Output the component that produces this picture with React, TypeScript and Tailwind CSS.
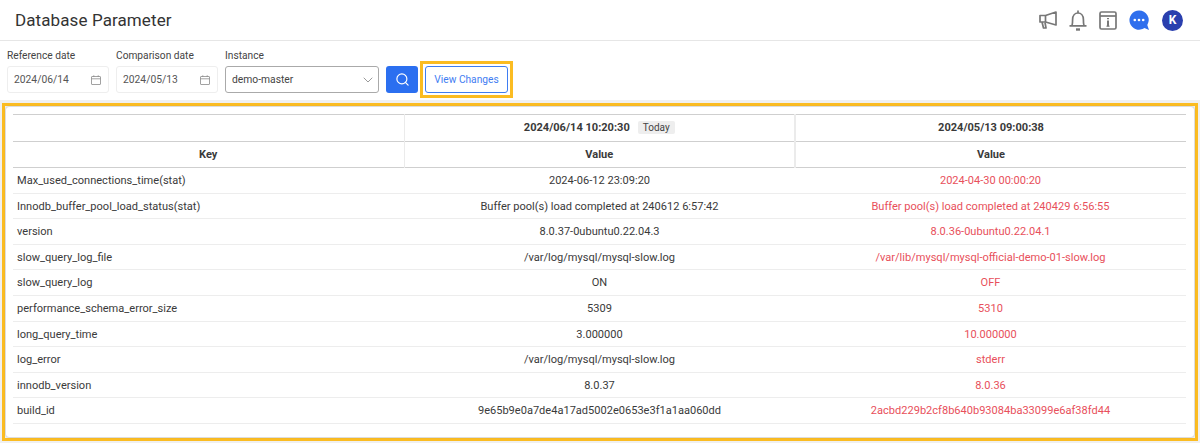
import { Search, ChevronDown } from 'lucide-react';

const rows = [
  ['Max_used_connections_time(stat)', '2024-06-12 23:09:20', '2024-04-30 00:00:20'],
  ['Innodb_buffer_pool_load_status(stat)', 'Buffer pool(s) load completed at 240612 6:57:42', 'Buffer pool(s) load completed at 240429 6:56:55'],
  ['version', '8.0.37-0ubuntu0.22.04.3', '8.0.36-0ubuntu0.22.04.1'],
  ['slow_query_log_file', '/var/log/mysql/mysql-slow.log', '/var/lib/mysql/mysql-official-demo-01-slow.log'],
  ['slow_query_log', 'ON', 'OFF'],
  ['performance_schema_error_size', '5309', '5310'],
  ['long_query_time', '3.000000', '10.000000'],
  ['log_error', '/var/log/mysql/mysql-slow.log', 'stderr'],
  ['innodb_version', '8.0.37', '8.0.36'],
  ['build_id', '9e65b9e0a7de4a17ad5002e0653e3f1a1aa060dd', '2acbd229b2cf8b640b93084ba33099e6af38fd44'],
];

function HeaderIcons() {
  return (
    <div className="flex items-center gap-3">
      <svg width="18" height="18" viewBox="0 0 18 18" fill="none" stroke="#777" strokeWidth="1.7" strokeLinejoin="round">
        <path d="M17 1 L6.5 4.5 H1 V11 H6.5 L17 14 Z" />
        <path d="M6.5 4.5 V11 M3 11 L4.5 17 H7 L6 11.5" />
      </svg>
      <svg width="18" height="21" viewBox="0 0 18 21" fill="none" stroke="#777" strokeWidth="1.7" strokeLinejoin="round">
        <path d="M0.5 15.8 H17.5 M3 15.8 C3.6 14 3.6 12 3.6 9.5 C3.6 5.5 6 3 9 3 C12 3 14.4 5.5 14.4 9.5 C14.4 12 14.4 14 15 15.8" />
        <path d="M9 0.5 V3" />
        <path d="M7 19.5 H11" strokeWidth="2.4" />
      </svg>
      <svg width="18" height="19" viewBox="0 0 18 19" fill="none" stroke="#777" strokeWidth="1.7" strokeLinejoin="round">
        <rect x="1" y="1" width="16" height="17" rx="1.5" />
        <path d="M1 5 H17" />
        <path d="M9 9.5 V15" strokeWidth="2" />
        <path d="M9 7 V8.2" strokeWidth="2" />
        <path d="M7.5 15.2 H10.5" strokeWidth="1.2" />
      </svg>
      <svg width="21" height="21" viewBox="0 0 21 21">
        <path d="M10 0.5 A9.6 9.6 0 1 0 15.5 18 L20 20 L18.3 15 A9.6 9.6 0 0 0 10 0.5 Z" fill="#2f6fed" />
        <circle cx="5.8" cy="10" r="1.3" fill="#fff" />
        <circle cx="10" cy="10" r="1.3" fill="#fff" />
        <circle cx="14.2" cy="10" r="1.3" fill="#fff" />
      </svg>
      <div className="flex h-[21px] w-[21px] items-center justify-center rounded-full bg-[#2a3fae] text-[12px] font-bold text-white">K</div>
    </div>
  );
}

function CalendarIcon() {
  return (
    <svg width="10" height="10" viewBox="0 0 10 10" fill="none" stroke="#8a8a8a" strokeWidth="0.8">
      <rect x="0.5" y="1.5" width="9" height="8" rx="0.5" />
      <path d="M0.5 3.8 H9.5 M2.8 0.3 V2 M7.2 0.3 V2" />
    </svg>
  );
}

function DateField({ label, value }: { label: string; value: string }) {
  return (
    <div className="w-[102px]">
      <div className="mb-[2px] h-[17px] pt-[1px] text-[10.2px] leading-[16px] text-[#444]">{label}</div>
      <div className="flex h-[27px] items-center justify-between rounded-[3px] border border-[#eeeeee] pl-[6px] pr-[7px] text-[10.3px] text-[#555]">
        <span>{value}</span>
        <CalendarIcon />
      </div>
    </div>
  );
}

export default function App() {
  return (
    <div className="flex h-[443px] w-[1200px] flex-col overflow-hidden bg-[#f0f0f0] font-['Roboto',sans-serif]">
      <header className="flex h-[41px] items-center justify-between border-b border-[#e6e6e6] bg-white pl-[15px] pr-[17px]">
        <h1 className="pt-[1px] text-[17px] font-normal tracking-[0.1px] text-[#333]">Database Parameter</h1>
        <HeaderIcons />
      </header>

      <div className="flex h-[59px] items-start gap-[7px] bg-white pl-[7px] pt-[6px]">
        <DateField label="Reference date" value="2024/06/14" />
        <DateField label="Comparison date" value="2024/05/13" />
        <div className="w-[154px]">
          <div className="mb-[2px] h-[17px] pt-[1px] text-[10.2px] leading-[16px] text-[#444]">Instance</div>
          <div className="flex h-[27px] items-center justify-between rounded-[3px] border border-[#aaaaaa] pl-[6px] pr-[2px] text-[10.3px] text-[#444]">
            <span>demo-master</span>
            <ChevronDown size={16} strokeWidth={1} color="#666" />
          </div>
        </div>
        <button className="mt-[19px] flex h-[27px] w-[32px] items-center justify-center rounded-[3px] bg-[#2b6ff0]">
          <Search size={15} strokeWidth={1.9} color="#fff" />
        </button>
        <div className="relative mt-[19px]">
          <button className="flex h-[27px] w-[83px] items-center justify-center rounded-[3px] border border-[#3f7df2] bg-white text-[10.2px] text-[#3f7df2]">
            View Changes
          </button>
          <div className="absolute left-[-5px] top-[-5px] h-[37px] w-[93px] border-[3px] border-[#fbbc22]" />
        </div>
      </div>

      <div className="ml-[2px] mt-[3px] h-[338px] w-[1196px] border-[3px] border-[#fbbc22] bg-[#f0f0f0] p-[1px]">
        <div className="h-[330px] rounded-[3px] bg-white px-[7px] pt-[7px] shadow-[0_0_2px_rgba(0,0,0,0.3)]">
          <table className="w-[1173px] table-fixed border-collapse text-[11.05px] text-[#3a3a3a]">
            <thead>
              <tr className="h-[27px] border-y-[1.5px] border-[#cfcfcf]">
                <th className="border-r border-[#ebebeb]" />
                <th className="border-r-2 border-[#ebebeb] pt-[1px] font-bold">
                  <span>2024/06/14 10:20:30</span>
                  <span className="ml-[8px] rounded-[2px] bg-[#eeeeee] px-[5px] py-[1px] text-[10px] font-normal text-[#444]">Today</span>
                </th>
                <th className="pt-[1px] font-bold">2024/05/13 09:00:38</th>
              </tr>
              <tr className="h-[26px] border-b-[1.5px] border-[#cfcfcf]">
                <th className="border-r border-[#ebebeb] pt-[2px] font-bold">Key</th>
                <th className="border-r-2 border-[#ebebeb] pt-[2px] font-bold">Value</th>
                <th className="pt-[2px] font-bold">Value</th>
              </tr>
            </thead>
            <tbody>
              {rows.map((r) => (
                <tr key={r[0]} className="h-[25.6px] border-b border-[#ededed]">
                  <td className="pl-[4px] pt-[2px]">{r[0]}</td>
                  <td className="pt-[2px] text-center">{r[1]}</td>
                  <td className="pt-[2px] text-center text-[#e8505b]">{r[2]}</td>
                </tr>
              ))}
            </tbody>
          </table>
        </div>
      </div>
    </div>
  );
}
